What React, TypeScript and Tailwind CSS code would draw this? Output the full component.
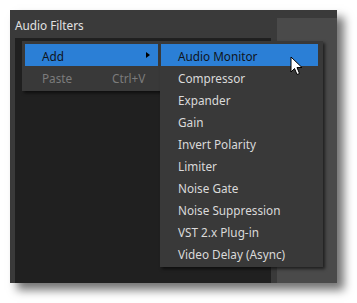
import React from 'react';

const filters = [
  'Audio Monitor',
  'Compressor',
  'Expander',
  'Gain',
  'Invert Polarity',
  'Limiter',
  'Noise Gate',
  'Noise Suppression',
  'VST 2.x Plug-in',
  'Video Delay (Async)',
];

const Cursor: React.FC = () => (
  <svg className="absolute left-[290px] top-[56px]" width="14" height="21" viewBox="0 0 14 21">
    <path
      d="M1 1 L1 16 L4.5 12.5 L7 18.5 L9.5 17.5 L7 11.5 L12 11.5 Z"
      fill="#ffffff"
      stroke="#000000"
      strokeWidth="1"
      strokeLinejoin="miter"
    />
  </svg>
);

const App: React.FC = () => {
  return (
    <div className="relative w-[357px] h-[303px] bg-white overflow-hidden font-['Noto_Sans','Open_Sans',sans-serif] text-[11.75px]">
      {/* dock window */}
      <div className="absolute left-[10px] top-[10px] w-[327px] h-[273px] flex bg-[#3a3a3a] shadow-[7px_7px_9px_rgba(0,0,0,0.55)]">
        <div className="flex flex-col w-[261px] pl-[5px]">
          <div className="h-[28px] flex items-center text-[#e2e2e2] leading-none pt-[3px]">Audio Filters</div>
          <div className="flex-1 bg-[#202020]" />
        </div>
        <div className="flex-1 pl-[6px] pt-[8px]">
          <div className="h-full bg-[#4a4a4a]" />
        </div>
      </div>

      {/* context menu */}
      <div className="absolute left-[22px] top-[41px] w-[138px] h-[50px] bg-[#393939] pt-[3px] pl-[3px] shadow-[2px_2px_3px_rgba(0,0,0,0.6)]">
        <div className="relative h-[22px] w-[133px] bg-[#2b7fd6] flex items-center pl-[17px] pt-[3px] text-[#10151c]">
          Add
          <div className="absolute left-[121px] top-[8px] w-0 h-0 border-y-[3px] border-y-transparent border-l-[4px] border-l-[#000000]" />
        </div>
        <div className="h-[23px] flex items-center pl-[17px] pt-[3px] text-[#7c7c7c]">
          <span className="w-[70px]">Paste</span>
          <span>Ctrl+V</span>
        </div>
      </div>

      {/* submenu */}
      <div className="absolute left-[160px] top-[41px] w-[163px] h-[226px] bg-[#393939] pt-[3px] pl-[1px] pr-[5px] shadow-[2px_2px_3px_rgba(0,0,0,0.6)]">
        {filters.map((f, i) => (
          <div
            key={f}
            className={
              i === 0
                ? 'h-[22px] flex items-center pl-[17px] pt-[3px] bg-[#2b7fd6] text-[#10151c]'
                : 'h-[22px] flex items-center pl-[17px] pt-[3px] text-[#dadada]'
            }
          >
            {f}
          </div>
        ))}
      </div>

      <Cursor />
    </div>
  );
};

export default App;
